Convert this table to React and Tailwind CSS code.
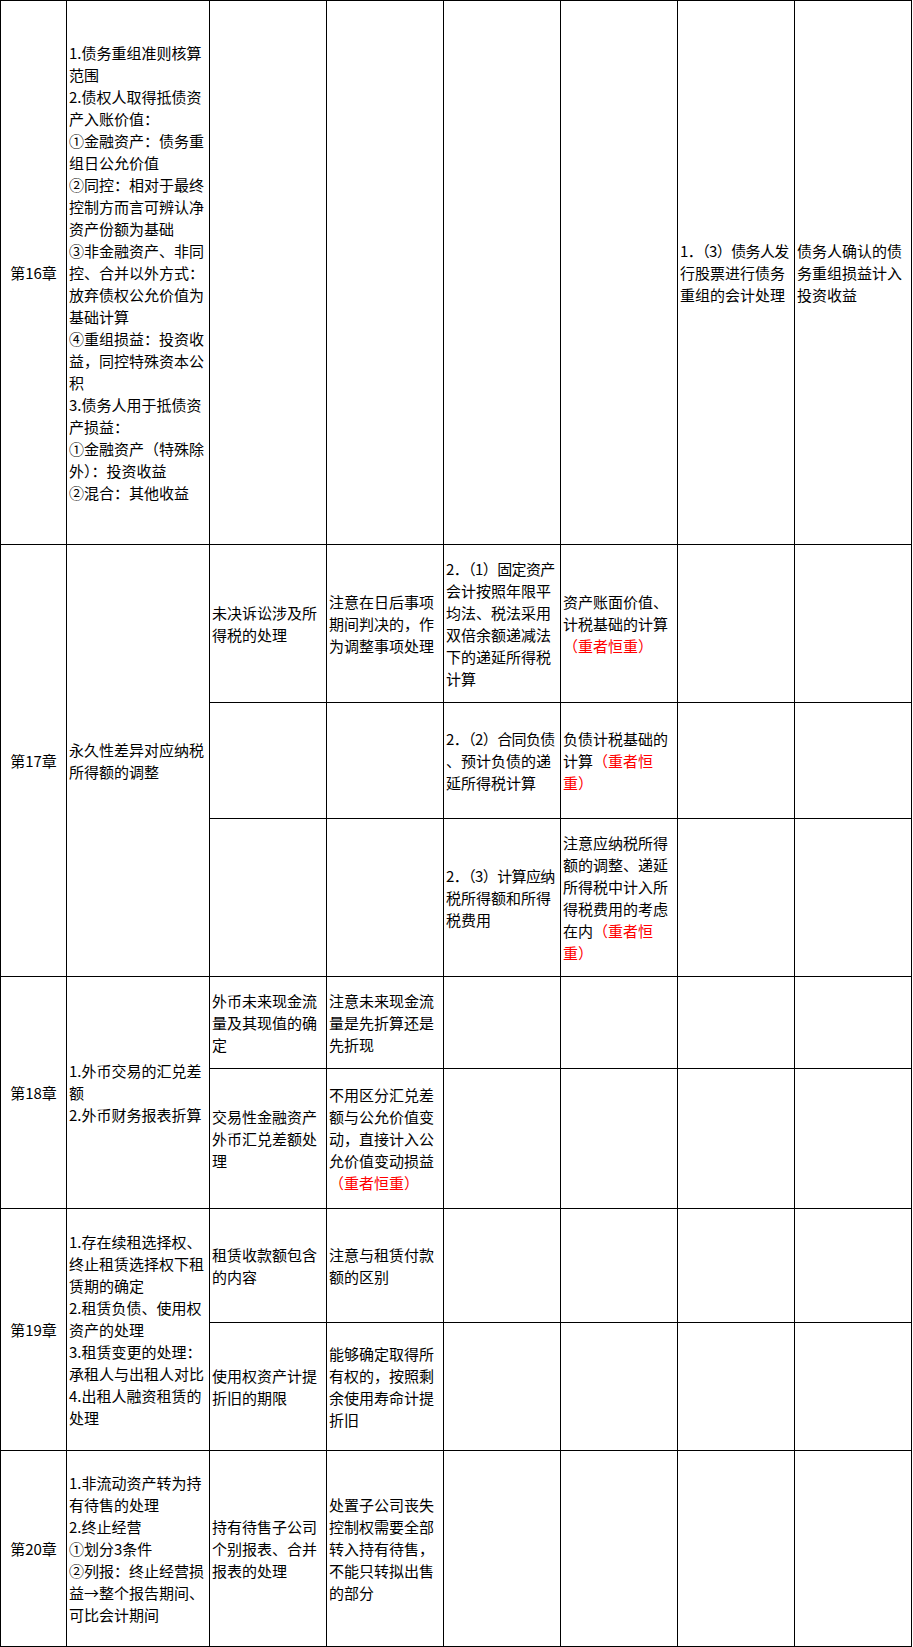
const red = (t) => <span className="text-[#ff0000]">{t}</span>
const tight = (t) => <span className="tracking-[-0.6px]">{t}</span>

const Cell = ({ lines = [], center = false, span = 1 }) => (
  <div
    className={
      'bg-white flex flex-col justify-center px-[2px] whitespace-nowrap overflow-visible ' +
      (center ? 'items-center ' : 'items-start ') +
      (span === 3 ? 'row-span-3' : span === 2 ? 'row-span-2' : '')
    }
  >
    {lines.map((l, i) => (
      <div key={i}>{l}</div>
    ))}
  </div>
)

const E = () => <Cell />

export default function App() {
  return (
    <div className="bg-white min-h-screen">
      <div className="grid w-fit grid-cols-[65px_142px_116px_116px_116px_116px_116px_116px] grid-rows-[543px_157px_115px_157px_91px_139px_113px_127px_195px] gap-px bg-black p-px text-[15px] leading-[22px] text-black font-['Noto_Sans_CJK_SC',sans-serif]">

        {/* 第16章 */}
        <Cell center lines={['第16章']} />
        <Cell
          lines={[
            '1.债务重组准则核算',
            '范围',
            '2.债权人取得抵债资',
            '产入账价值：',
            '①金融资产：债务重',
            '组日公允价值',
            '②同控：相对于最终',
            '控制方而言可辨认净',
            '资产份额为基础',
            '③非金融资产、非同',
            '控、合并以外方式：',
            '放弃债权公允价值为',
            '基础计算',
            '④重组损益：投资收',
            '益，同控特殊资本公',
            '积',
            '3.债务人用于抵债资',
            '产损益：',
            '①金融资产（特殊除',
            '外）：投资收益',
            '②混合：其他收益',
          ]}
        />
        <E /><E /><E /><E />
        <Cell lines={[tight('1．（3）债务人发'), '行股票进行债务', '重组的会计处理']} />
        <Cell lines={['债务人确认的债', '务重组损益计入', '投资收益']} />

        {/* 第17章 */}
        <Cell span={3} center lines={['第17章']} />
        <Cell span={3} lines={['永久性差异对应纳税', '所得额的调整']} />

        <Cell lines={['未决诉讼涉及所', '得税的处理']} />
        <Cell lines={['注意在日后事项', '期间判决的，作', '为调整事项处理']} />
        <Cell lines={[tight('2．（1）固定资产'), '会计按照年限平', '均法、税法采用', '双倍余额递减法', '下的递延所得税', '计算']} />
        <Cell lines={['资产账面价值、', '计税基础的计算', red('（重者恒重）')]} />
        <E /><E />

        <E /><E />
        <Cell lines={[tight('2．（2）合同负债'), '、预计负债的递', '延所得税计算']} />
        <Cell lines={['负债计税基础的', <>计算{red('（重者恒')}</>, red('重）')]} />
        <E /><E />

        <E /><E />
        <Cell lines={[tight('2．（3）计算应纳'), '税所得额和所得', '税费用']} />
        <Cell
          lines={[
            '注意应纳税所得',
            '额的调整、递延',
            '所得税中计入所',
            '得税费用的考虑',
            <>在内{red('（重者恒')}</>,
            red('重）'),
          ]}
        />
        <E /><E />

        {/* 第18章 */}
        <Cell span={2} center lines={['第18章']} />
        <Cell span={2} lines={['1.外币交易的汇兑差', '额', '2.外币财务报表折算']} />

        <Cell lines={['外币未来现金流', '量及其现值的确', '定']} />
        <Cell lines={['注意未来现金流', '量是先折算还是', '先折现']} />
        <E /><E /><E /><E />

        <Cell lines={['交易性金融资产', '外币汇兑差额处', '理']} />
        <Cell lines={['不用区分汇兑差', '额与公允价值变', '动，直接计入公', '允价值变动损益', red('（重者恒重）')]} />
        <E /><E /><E /><E />

        {/* 第19章 */}
        <Cell span={2} center lines={['第19章']} />
        <Cell
          span={2}
          lines={[
            '1.存在续租选择权、',
            '终止租赁选择权下租',
            '赁期的确定',
            '2.租赁负债、使用权',
            '资产的处理',
            '3.租赁变更的处理：',
            '承租人与出租人对比',
            '4.出租人融资租赁的',
            '处理',
          ]}
        />

        <Cell lines={['租赁收款额包含', '的内容']} />
        <Cell lines={['注意与租赁付款', '额的区别']} />
        <E /><E /><E /><E />

        <Cell lines={['使用权资产计提', '折旧的期限']} />
        <Cell lines={['能够确定取得所', '有权的，按照剩', '余使用寿命计提', '折旧']} />
        <E /><E /><E /><E />

        {/* 第20章 */}
        <Cell center lines={['第20章']} />
        <Cell
          lines={[
            '1.非流动资产转为持',
            '有待售的处理',
            '2.终止经营',
            '①划分3条件',
            '②列报：终止经营损',
            '益→整个报告期间、',
            '可比会计期间',
          ]}
        />
        <Cell lines={['持有待售子公司', '个别报表、合并', '报表的处理']} />
        <Cell lines={['处置子公司丧失', '控制权需要全部', '转入持有待售，', '不能只转拟出售', '的部分']} />
        <E /><E /><E /><E />
      </div>
    </div>
  )
}
